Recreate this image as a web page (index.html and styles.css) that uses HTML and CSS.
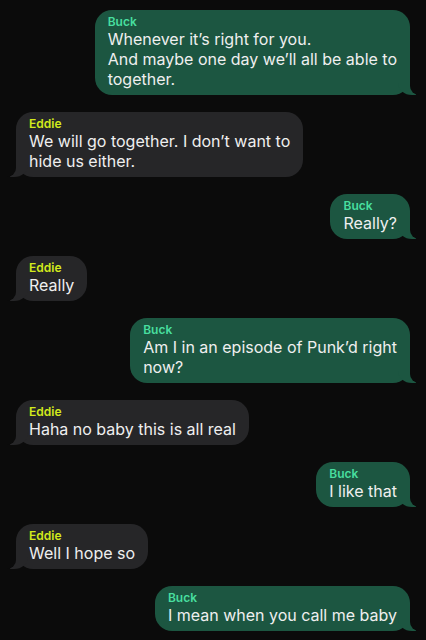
FILE: index.html
```html
<!DOCTYPE html>
<html lang="en">
<head>
<meta charset="utf-8">
<link rel="stylesheet" href="styles.css">
</head>
<body>
<div class="chat">
  <div class="msg me"><div class="name">Buck</div><div class="text">Whenever it’s right for you.<br>And maybe one day we’ll all be able to<br>together.</div></div>
  <div class="msg them"><div class="name">Eddie</div><div class="text">We will go together. I don’t want to<br>hide us either.</div></div>
  <div class="msg me"><div class="name">Buck</div><div class="text">Really?</div></div>
  <div class="msg them"><div class="name">Eddie</div><div class="text">Really</div></div>
  <div class="msg me"><div class="name">Buck</div><div class="text">Am I in an episode of Punk’d right<br>now?</div></div>
  <div class="msg them"><div class="name">Eddie</div><div class="text">Haha no baby this is all real</div></div>
  <div class="msg me"><div class="name">Buck</div><div class="text">I like that</div></div>
  <div class="msg them"><div class="name">Eddie</div><div class="text">Well I hope so</div></div>
  <div class="msg me"><div class="name">Buck</div><div class="text">I mean when you call me baby</div></div>
</div>
</body>
</html>
```
FILE: styles.css
```css
html, body {
  margin: 0;
  padding: 0;
  background: #0b0b0b;
}
body {
  font-family: Inter, "Noto Sans", sans-serif;
  color: #efefef;
  width: 426px;
  height: 640px;
  overflow: hidden;
}
.chat {
  display: flex;
  flex-direction: column;
  gap: 17px;
  padding: 10px 16px 0 16px;
}
.msg {
  position: relative;
  padding: 4px 13px 6px 13px;
  border-radius: 17px;
  white-space: nowrap;
}
.me {
  align-self: flex-end;
  background: #1c5641;
}
.them {
  align-self: flex-start;
  background: #262628;
}
.name {
  font-size: 12px;
  line-height: 15px;
  font-weight: 600;
}
.me .name { color: #48df9f; }
.them .name { color: #d3ea1c; }
.text {
  font-size: 16px;
  line-height: 20px;
}
.msg::before,
.msg::after {
  content: "";
  position: absolute;
  bottom: 0;
  height: 18px;
}
.me::before {
  right: -6px;
  width: 18px;
  background: #1c5641;
  border-bottom-left-radius: 14px 12px;
}
.me::after {
  right: -22px;
  width: 22px;
  background: #0b0b0b;
  border-bottom-left-radius: 9px;
}
.them::before {
  left: -6px;
  width: 18px;
  background: #262628;
  border-bottom-right-radius: 14px 12px;
}
.them::after {
  left: -22px;
  width: 22px;
  background: #0b0b0b;
  border-bottom-right-radius: 9px;
}
```
